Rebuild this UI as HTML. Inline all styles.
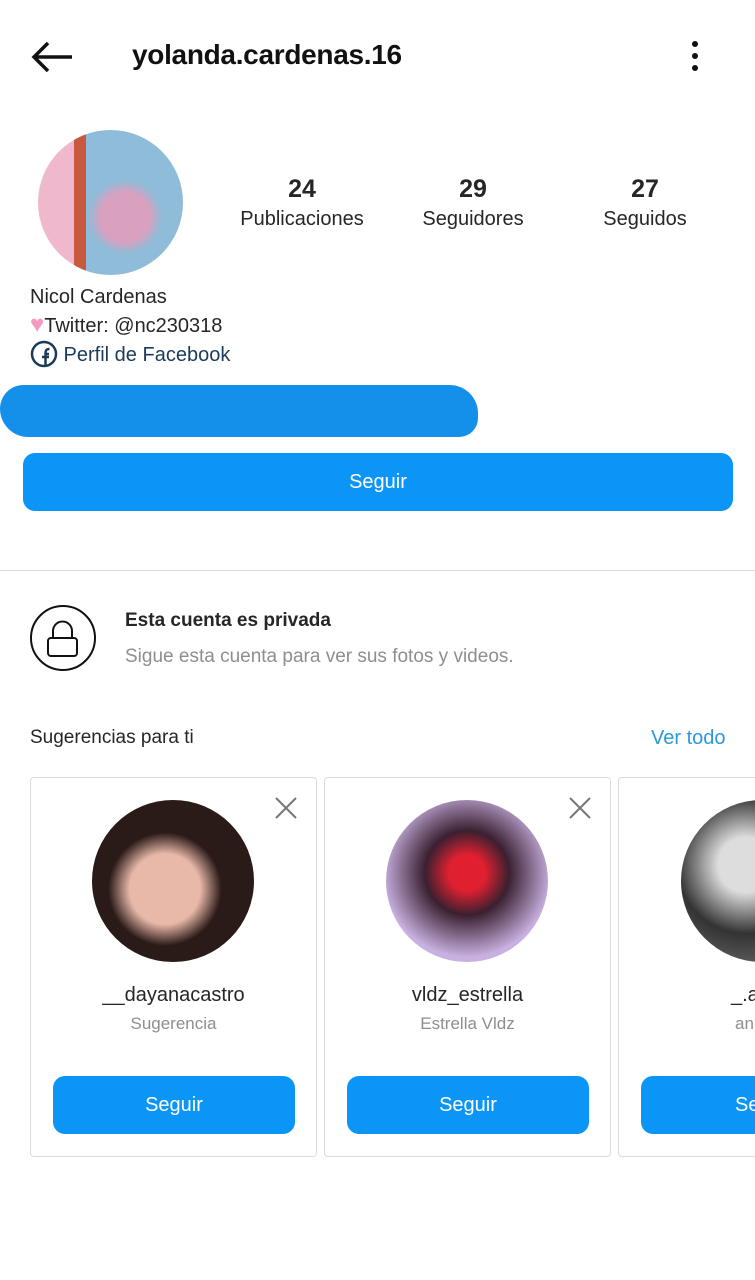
<!DOCTYPE html>
<html><head><meta charset="utf-8"><style>
*{margin:0;padding:0;box-sizing:border-box}
body{width:755px;height:1280px;background:#fff;font-family:"Liberation Sans","DejaVu Sans",sans-serif;color:#262626;position:relative;overflow:hidden}
.a{position:absolute}
.btn{position:absolute;background:#0b95f6;color:#fff;border-radius:12px;text-align:center;font-size:20px}
.card{position:absolute;top:777px;width:287px;height:380px;border:1px solid #dbdbdb;border-radius:4px}
.av{position:absolute;left:61px;top:22px;width:162px;height:162px;border-radius:50%}
.un{position:absolute;top:206px;width:100%;text-align:center;font-size:20px}
.sub{position:absolute;top:236px;width:100%;text-align:center;font-size:17px;color:#8e8e8e}
.x{position:absolute;right:18px;top:18px}
</style></head><body>
<svg class="a" style="left:30px;top:40px" width="44" height="34" viewBox="0 0 44 34"><path d="M42 17H4M18 3L4 17l14 14" stroke="#111" stroke-width="3.5" fill="none"/></svg>
<div class="a" style="left:132px;top:39px;font-size:28px;font-weight:bold;color:#111;letter-spacing:-0.3px">yolanda.cardenas.16</div>
<div class="a" style="left:692px;top:41px;width:7px"><div style="width:6px;height:6px;background:#111;border-radius:50%;margin-bottom:6px"></div><div style="width:6px;height:6px;background:#111;border-radius:50%;margin-bottom:6px"></div><div style="width:6px;height:6px;background:#111;border-radius:50%"></div></div>
<div class="a" style="left:38px;top:130px;width:145px;height:145px;border-radius:50%;background:radial-gradient(circle at 60% 60%,#d9a0c0 0 20%,transparent 30%),linear-gradient(90deg,#f0b8cc 0 25%,#c8583e 25% 33%,#8fbcd8 33%)"></div>
<div class="a" style="left:240px;top:175px;width:124px;text-align:center"><div style="font-size:25px;font-weight:bold">24</div><div style="font-size:20px;margin-top:4px">Publicaciones</div></div>
<div class="a" style="left:418px;top:175px;width:110px;text-align:center"><div style="font-size:25px;font-weight:bold">29</div><div style="font-size:20px;margin-top:4px">Seguidores</div></div>
<div class="a" style="left:596px;top:175px;width:98px;text-align:center"><div style="font-size:25px;font-weight:bold">27</div><div style="font-size:20px;margin-top:4px">Seguidos</div></div>
<div class="a" style="left:30px;top:284px;font-size:20px;line-height:27px">Nicol Cardenas<br><span style="color:#f49ac1;font-size:24px">♥</span>Twitter: @nc230318<br><span style="color:#1b3b59"><svg width="28" height="28" viewBox="0 0 28 28" style="vertical-align:-7px"><circle cx="14" cy="14" r="12" fill="none" stroke="#1b3b59" stroke-width="2.5"/><path d="M15.5 26V14h3.5M12 17h7M15.5 14c0-4 1-5 4-5" stroke="#1b3b59" stroke-width="2.5" fill="none"/></svg> Perfil de Facebook</span></div>
<div class="a" style="left:0;top:385px;width:478px;height:52px;background:#1590ea;border-radius:25px 30px 20px 30px"></div>
<div class="btn" style="left:23px;top:453px;width:710px;height:58px;line-height:58px">Seguir</div>
<div class="a" style="left:0;top:570px;width:755px;height:1px;background:#dbdbdb"></div>
<svg class="a" style="left:28px;top:603px" width="70" height="70"><circle cx="35" cy="35" r="32" fill="none" stroke="#111" stroke-width="2"/><rect x="20" y="35" width="29" height="18" rx="3" fill="none" stroke="#111" stroke-width="2"/><path d="M25 35v-7a9.5 9.5 0 0 1 19 0v7" fill="none" stroke="#111" stroke-width="2"/></svg>
<div class="a" style="left:125px;top:610px;font-size:19px;font-weight:bold">Esta cuenta es privada</div>
<div class="a" style="left:125px;top:646px;font-size:19px;color:#8e8e8e">Sigue esta cuenta para ver sus fotos y videos.</div>
<div class="a" style="left:30px;top:727px;font-size:19px">Sugerencias para ti</div>
<div class="a" style="left:651px;top:727px;font-size:20px;color:#2a9ad8">Ver todo</div>
<div class="card" style="left:30px"><svg class="x" width="24" height="24"><path d="M2 2l20 20M22 2L2 22" stroke="#777" stroke-width="2"/></svg><div class="av" style="background:radial-gradient(circle at 45% 55%,#e8b8a8 0 28%,#2a1a18 45%)"></div><div class="un">__dayanacastro</div><div class="sub">Sugerencia</div><div class="btn" style="left:22px;top:298px;width:242px;height:58px;line-height:58px">Seguir</div></div>
<div class="card" style="left:324px"><svg class="x" width="24" height="24"><path d="M2 2l20 20M22 2L2 22" stroke="#777" stroke-width="2"/></svg><div class="av" style="background:radial-gradient(circle at 50% 45%,#e02030 0 15%,#3a2030 35%,#c8b0e0 70%)"></div><div class="un">vldz_estrella</div><div class="sub">Estrella Vldz</div><div class="btn" style="left:22px;top:298px;width:242px;height:58px;line-height:58px">Seguir</div></div>
<div class="card" style="left:618px;width:200px"><div class="av" style="left:62px;background:radial-gradient(circle at 40% 40%,#ddd 0 20%,#333 50%,#888)"></div><div class="un" style="text-align:left;left:112px">_.a</div><div class="sub" style="text-align:left;left:116px">an</div><div class="btn" style="left:22px;top:298px;width:242px;height:58px;line-height:58px;text-align:left;padding-left:94px">Se</div></div>
</body></html>
